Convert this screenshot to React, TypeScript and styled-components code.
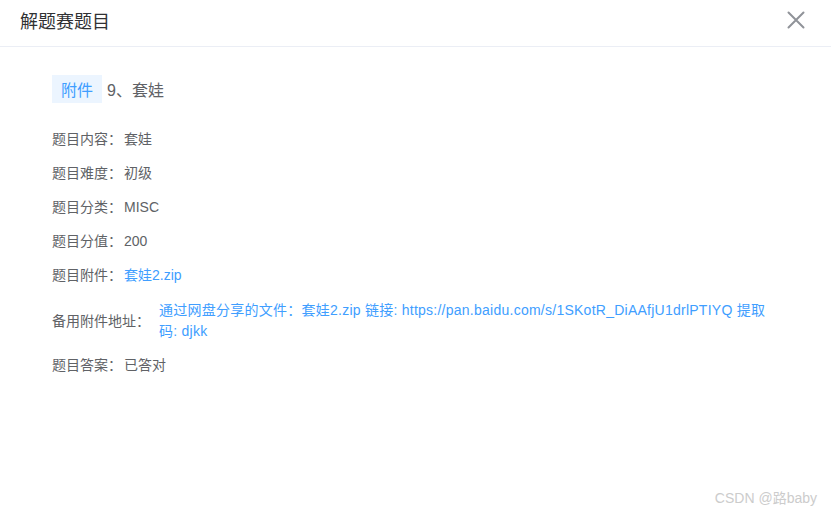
import React from "react";
import styled, { createGlobalStyle } from "styled-components";

const GlobalStyle = createGlobalStyle`
  html, body {
    margin: 0;
    padding: 0;
    background: #fff;
  }
  body {
    font-family: "Liberation Sans", "Noto Sans CJK SC", sans-serif;
  }
`;

const rows: { label: string; value: string; link?: boolean }[] = [
  { label: "题目内容：", value: "套娃" },
  { label: "题目难度：", value: "初级" },
  { label: "题目分类：", value: "MISC" },
  { label: "题目分值：", value: "200" },
  { label: "题目附件：", value: "套娃2.zip", link: true },
];

export default function App() {
  return (
    <>
      <GlobalStyle />
      <Dialog>
        <Header>
          <Title>解题赛题目</Title>
          <CloseButton aria-label="关闭">
            <svg width="18" height="18" viewBox="0 0 18 18">
              <path
                d="M1.5 1.5 L16.5 16.5 M16.5 1.5 L1.5 16.5"
                stroke="#909399"
                strokeWidth="2"
                strokeLinecap="round"
              />
            </svg>
          </CloseButton>
        </Header>
        <Body>
          <Heading>
            <Tag>附件</Tag>
            <HeadingText>9、套娃</HeadingText>
          </Heading>
          <Rows>
            {rows.map((r) => (
              <Row key={r.label}>
                <Label>{r.label}</Label>
                {r.link ? <Link>{r.value}</Link> : <Value>{r.value}</Value>}
              </Row>
            ))}
            <Row $center>
              <Label $gap>备用附件地址：</Label>
              <Link $wide>
                通过网盘分享的文件：套娃2.zip 链接:
                https://pan.baidu.com/s/1SKotR_DiAAfjU1drlPTIYQ 提取码: djkk
              </Link>
            </Row>
            <Row>
              <Label>题目答案：</Label>
              <Value>已答对</Value>
            </Row>
          </Rows>
        </Body>
        <Watermark>CSDN @路baby</Watermark>
      </Dialog>
    </>
  );
}

const Dialog = styled.div`
  position: relative;
  width: 831px;
  height: 515px;
  background: #fff;
  overflow: hidden;
`;

const Header = styled.div`
  display: flex;
  align-items: center;
  justify-content: space-between;
  height: 47px;
  padding: 0 26px 0 20px;
  box-sizing: border-box;
  border-bottom: 1px solid #ebeef5;
`;

const Title = styled.span`
  font-size: 18px;
  color: #303133;
  line-height: 24px;
  margin-top: -3px;
`;

const CloseButton = styled.button`
  display: flex;
  border: 0;
  background: transparent;
  padding: 0;
  margin-top: -6px;
  cursor: pointer;
`;

const Body = styled.div`
  padding: 28px 51px 0 52px;
`;

const Heading = styled.div`
  display: flex;
  align-items: center;
  gap: 5px;
`;

const Tag = styled.span`
  display: inline-flex;
  align-items: center;
  height: 28px;
  padding: 0 9px;
  background: #ecf5ff;
  color: #409eff;
  font-size: 16px;
`;

const HeadingText = styled.span`
  font-size: 16px;
  color: #606266;
`;

const Rows = styled.div`
  display: flex;
  flex-direction: column;
  gap: 13px;
  margin-top: 26px;
`;

const Row = styled.div<{ $center?: boolean }>`
  display: flex;
  align-items: ${({ $center }) => ($center ? "center" : "flex-start")};
  font-size: 14px;
  line-height: 21px;
  ${({ $center }) => ($center ? "margin: 1px 0 0;" : "")}
`;

const Label = styled.span<{ $gap?: boolean }>`
  flex: none;
  color: #606266;
  margin-right: ${({ $gap }) => ($gap ? "9px" : "2px")};
`;

const Value = styled.span`
  color: #606266;
`;

const Link = styled.span<{ $wide?: boolean }>`
  color: #409eff;
  cursor: pointer;
  letter-spacing: ${({ $wide }) => ($wide ? "0.25px" : "0")};
`;

const Watermark = styled.div`
  position: absolute;
  right: 14px;
  bottom: 8px;
  font-size: 14px;
  color: #cccccc;
`;
